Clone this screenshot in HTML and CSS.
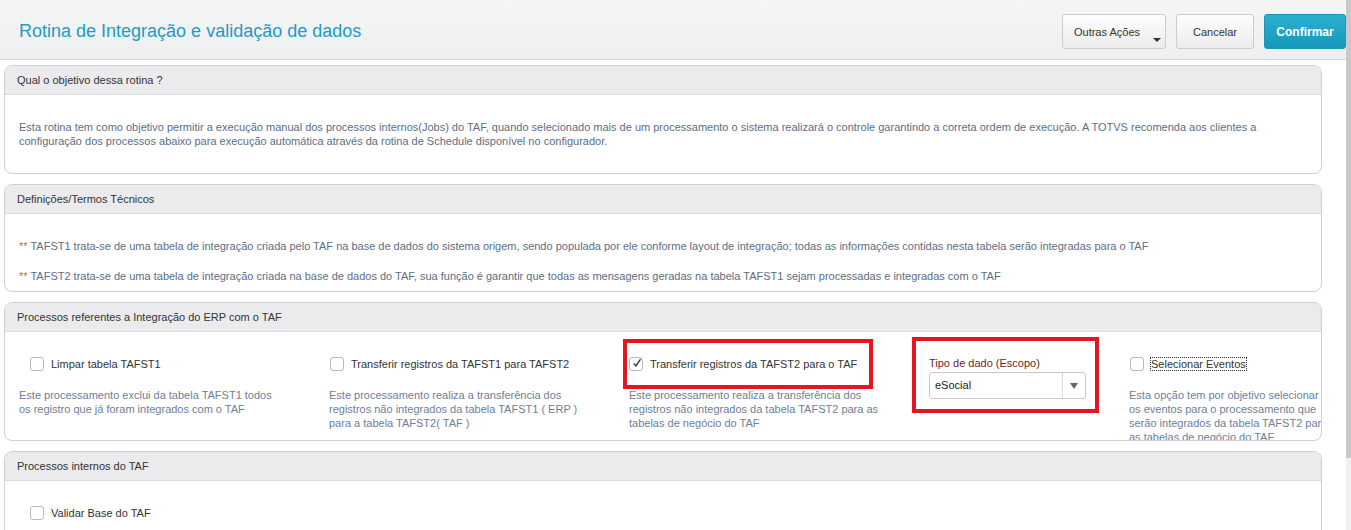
FILE: index.html
```html
<!DOCTYPE html>
<html lang="pt-BR">

<head>
    <meta charset="UTF-8">
    <title>Rotina de Integração e validação de dados</title>
    <link rel="stylesheet" href="styles.css">
</head>

<body>
    <div class="page">
        <div class="main">
            <div class="topbar">
                <h1>Rotina de Integração e validação de dados</h1>
                <div class="actions">
                    <button class="btn btn-menu">Outras Ações<span class="caret"></span></button>
                    <button class="btn">Cancelar</button>
                    <button class="btn btn-primary">Confirmar</button>
                </div>
            </div>

            <div class="content">
                <div class="panel panel-obj">
                    <div class="panel-head">Qual o objetivo dessa rotina ?</div>
                    <div class="panel-body">
                        <p class="info">Esta rotina tem como objetivo permitir a execução manual dos processos internos(Jobs) do TAF, quando selecionado mais de um processamento o sistema realizará o controle garantindo a correta ordem de execução. A TOTVS recomenda aos clientes a configuração dos processos abaixo para execução automática através da rotina de Schedule disponível no configurador.</p>
                    </div>
                </div>

                <div class="panel panel-def">
                    <div class="panel-head">Definições/Termos Técnicos</div>
                    <div class="panel-body">
                        <p class="info"><span class="star">**</span> TAFST1 trata-se de uma tabela de integração criada pelo TAF na base de dados do sistema origem, sendo populada por ele conforme layout de integração; todas as informações contidas nesta tabela serão integradas para o TAF</p>
                        <p class="info"><span class="star">**</span> TAFST2 trata-se de uma tabela de integração criada na base de dados do TAF, sua função é garantir que todas as mensagens geradas na tabela TAFST1 sejam processadas e integradas com o TAF</p>
                    </div>
                </div>

                <div class="panel panel-erp">
                    <div class="panel-head">Processos referentes a Integração do ERP com o TAF</div>
                    <div class="panel-body cols">
                        <div class="col col-first">
                            <label class="check"><span class="box"></span>Limpar tabela TAFST1</label>
                            <p class="desc">Este processamento exclui da tabela TAFST1 todos os registro que já foram integrados com o TAF</p>
                        </div>
                        <div class="col">
                            <label class="check"><span class="box"></span>Transferir registros da TAFST1 para TAFST2</label>
                            <p class="desc">Este processamento realiza a transferência dos registros não integrados da tabela TAFST1 ( ERP ) para a tabela TAFST2( TAF )</p>
                        </div>
                        <div class="col">
                            <div class="mark mark-check">
                                <label class="check"><span class="box checked"><svg viewBox="0 0 14 14" width="14" height="14"><path d="M2.5 7.5 L5.5 11 L12 1.5" fill="none" stroke="#333" stroke-width="2"/></svg></span>Transferir registros da TAFST2 para o TAF</label>
                            </div>
                            <p class="desc">Este processamento realiza a transferência dos registros não integrados da tabela TAFST2 para as tabelas de negócio do TAF</p>
                        </div>
                        <div class="col col-field">
                            <div class="mark mark-field">
                                <div class="field-label">Tipo de dado (Escopo)</div>
                                <div class="select">
                                    <span class="select-value">eSocial</span>
                                    <span class="select-arrow"></span>
                                </div>
                            </div>
                        </div>
                        <div class="col col-last">
                            <label class="check"><span class="box"></span><span class="focus">Selecionar Eventos</span></label>
                            <p class="desc">Esta opção tem por objetivo selecionar<br>os eventos para o processamento que<br>serão integrados da tabela TAFST2 para<br>as tabelas de negócio do TAF</p>
                        </div>
                    </div>
                </div>

                <div class="panel panel-int">
                    <div class="panel-head">Processos internos do TAF</div>
                    <div class="panel-body cols">
                        <div class="col col-first">
                            <label class="check"><span class="box"></span>Validar Base do TAF</label>
                        </div>
                    </div>
                </div>
            </div>
        </div>
        <div class="scrollbar"><div class="thumb"></div></div>
    </div>
</body>

</html>
```

FILE: styles.css
```css
body {
    margin: 0;
    font-family: "Liberation Sans", Arial, sans-serif;
    background-color: #fff;
    overflow: hidden;
}

.page {
    display: flex;
    height: 530px;
}

.main {
    flex: 1;
    overflow: hidden;
}

.scrollbar {
    width: 5px;
    background-color: #f0f0f0;
}

.thumb {
    height: 458px;
    background-color: #c9c9c9;
}

/* top bar */
.topbar {
    display: flex;
    justify-content: space-between;
    align-items: flex-start;
    height: 59px;
    border-bottom: 1px solid #d8d8d8;
    background: linear-gradient(#f5f5f5, #eeeff0);
}

h1 {
    margin: 21px 0 0 19px;
    font-size: 18px;
    font-weight: normal;
    color: #1d9cc6;
}

.actions {
    display: flex;
    gap: 10px;
    margin-top: 14px;
}

.btn {
    position: relative;
    height: 35px;
    padding: 0 16px;
    border: 1px solid #ccc;
    border-radius: 3px;
    background: linear-gradient(#fdfdfd, #ececec);
    font-family: "Liberation Sans", Arial, sans-serif;
    font-size: 11px;
    color: #333;
}

.btn-menu {
    width: 104px;
    padding: 0 12px 0 11px;
    text-align: left;
}

.caret {
    position: absolute;
    right: 4px;
    bottom: 6px;
    border-left: 4px solid transparent;
    border-right: 4px solid transparent;
    border-top: 4px solid #333;
}

.btn-primary {
    width: 82px;
    padding: 0;
    border-color: #1a95b6;
    background: linear-gradient(#2cb0d0, #1598bb);
    color: #fff;
    font-weight: bold;
    font-size: 12px;
}

/* panels */
.content {
    padding: 5px 24px 0 4px;
}

.panel {
    border: 1px solid #cfcfcf;
    border-radius: 8px;
    margin-bottom: 10px;
    overflow: hidden;
}

.panel-head {
    height: 28px;
    line-height: 29px;
    padding-left: 12px;
    background-color: #ebebee;
    border-bottom: 1px solid #dcdcdf;
    font-size: 11px;
    color: #333;
}

.panel-body {
    padding: 0 14px;
}

.panel-obj .panel-body {
    height: 78px;
}

.panel-obj .info {
    margin: 0;
    padding-top: 25px;
}

.panel-def .panel-body {
    height: 77px;
}

.panel-def .info {
    margin: 0;
    padding-top: 25px;
}

.panel-def .info + .info {
    padding-top: 16px;
}

.info {
    font-size: 11px;
    line-height: 14px;
    color: #5c6d85;
}

.star {
    color: #c0694e;
}

.panel-erp .panel-body {
    height: 108px;
}

.panel-int .panel-body {
    height: 60px;
}

.cols {
    display: flex;
}

.col {
    width: 300px;
    flex-shrink: 0;
    padding-top: 25px;
}

.col-first {
    width: 310px;
}

.col-first .check {
    padding-left: 11px;
}

.col-field {
    width: 200px;
}

.col-last {
    width: 215px;
}

.check {
    display: flex;
    align-items: center;
    height: 14px;
    padding-left: 1px;
    font-size: 11px;
    color: #333;
}

.box {
    display: inline-flex;
    align-items: center;
    justify-content: center;
    width: 12px;
    height: 12px;
    margin-right: 7px;
    border: 1px solid #b9b9b9;
    border-radius: 3px;
    background-color: #fff;
}

.box.checked svg {
    margin-top: -3px;
    margin-left: 2px;
}

.focus {
    outline: 1px dotted #333;
    outline-offset: 0;
}

.desc {
    margin: 17px 0 0 0;
    width: 255px;
    font-size: 11px;
    line-height: 14px;
    color: #6d7e96;
}

.col-last .desc {
    width: 215px;
    white-space: nowrap;
}

/* red highlight marks */
.mark {
    border: 4px solid #e6151f;
}

.mark-check {
    margin: -18px 0 0 -6px;
    width: 250px;
    height: 50px;
    box-sizing: border-box;
    display: flex;
    align-items: center;
}

.mark-check .check {
    padding-left: 2px;
}

.mark-check + .desc {
    margin-top: -1px;
}

.mark-field {
    margin: -20px 0 0 -17px;
    width: 187px;
    height: 76px;
    padding: 16px 0 0 13px;
    box-sizing: border-box;
}

.field-label {
    font-size: 11px;
    color: #6e1c1c;
    margin-bottom: 3px;
}

.select {
    display: flex;
    width: 155px;
    height: 25px;
    border: 1px solid #c9c9c9;
    border-radius: 3px;
    background-color: #fff;
}

.select-value {
    flex: 1;
    line-height: 25px;
    padding-left: 5px;
    font-size: 11px;
    color: #222;
}

.select-arrow {
    width: 22px;
    border-left: 1px solid #d6d6d6;
    display: flex;
    align-items: center;
    justify-content: center;
}

.select-arrow::after {
    content: "";
    border-left: 4px solid transparent;
    border-right: 4px solid transparent;
    border-top: 6px solid #666;
}
```
